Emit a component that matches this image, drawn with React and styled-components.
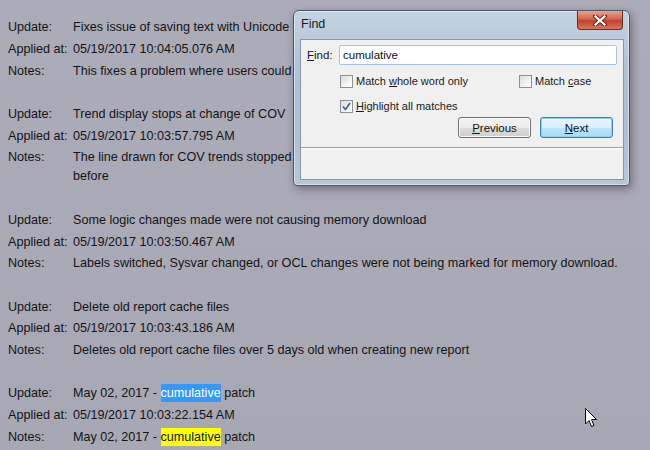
import styled, { createGlobalStyle } from 'styled-components';

const GlobalStyle = createGlobalStyle`
  html, body {
    margin: 0;
    padding: 0;
    background: #a9a9b5;
  }
  body {
    font-family: "Liberation Sans", Arial, sans-serif;
    color: #141414;
  }
`;

const updates = [
  {
    update: 'Fixes issue of saving text with Unicode',
    applied: '05/19/2017 10:04:05.076 AM',
    notes: ['This fixes a problem where users could'],
  },
  {
    update: 'Trend display stops at change of COV',
    applied: '05/19/2017 10:03:57.795 AM',
    notes: ['The line drawn for COV trends stopped', 'before'],
  },
  {
    update: 'Some logic changes made were not causing memory download',
    applied: '05/19/2017 10:03:50.467 AM',
    notes: ['Labels switched, Sysvar changed, or OCL changes were not being marked for memory download.'],
  },
  {
    update: 'Delete old report cache files',
    applied: '05/19/2017 10:03:43.186 AM',
    notes: ['Deletes old report cache files over 5 days old when creating new report'],
  },
];

export default function App() {
  return (
    <>
      <GlobalStyle />
      <Page>
        <Log>
          {updates.map((u) => (
            <Group key={u.applied}>
              <Row>
                <Label>Update:</Label>
                <Value>{u.update}</Value>
              </Row>
              <Row>
                <Label>Applied at:</Label>
                <Value>{u.applied}</Value>
              </Row>
              <Row>
                <Label>Notes:</Label>
                <Value>
                  {u.notes.map((n) => (
                    <NoteLine key={n}>{n}</NoteLine>
                  ))}
                </Value>
              </Row>
            </Group>
          ))}
          <Group>
            <Row>
              <Label>Update:</Label>
              <Value>
                May 02, 2017 - <Mark $current>cumulative</Mark> patch
              </Value>
            </Row>
            <Row>
              <Label>Applied at:</Label>
              <Value>05/19/2017 10:03:22.154 AM</Value>
            </Row>
            <Row>
              <Label>Notes:</Label>
              <Value>
                May 02, 2017 - <Mark>cumulative</Mark> patch
              </Value>
            </Row>
          </Group>
        </Log>

        <FindWindow>
          <TitleBar>
            <Title>Find</Title>
            <CloseButton>
              <svg width="14" height="11" viewBox="0 0 14 11">
                <path d="M2 1 L12 10 M12 1 L2 10" stroke="#5a2a22" strokeWidth="4" strokeLinecap="square" />
                <path d="M2.5 1.5 L11.5 9.5 M11.5 1.5 L2.5 9.5" stroke="#ffffff" strokeWidth="2.2" strokeLinecap="square" />
              </svg>
            </CloseButton>
          </TitleBar>
          <Client>
            <FindRow>
              <FieldLabel><u>F</u>ind:</FieldLabel>
              <Input defaultValue="cumulative" />
            </FindRow>
            <OptionRow>
              <Option>
                <Box />
                <span>Match <u>w</u>hole word only</span>
              </Option>
              <Option>
                <Box />
                <span>Match <u>c</u>ase</span>
              </Option>
            </OptionRow>
            <OptionRow $gap={11}>
              <Option>
                <Box>
                  <svg width="9" height="9" viewBox="0 0 9 9">
                    <path d="M1 4.5 L3.5 7.5 L8 1" fill="none" stroke="#3a5aa0" strokeWidth="1.6" />
                  </svg>
                </Box>
                <span><u>H</u>ighlight all matches</span>
              </Option>
            </OptionRow>
            <ButtonRow>
              <Button><span><u>P</u>revious</span></Button>
              <Button $default><span><u>N</u>ext</span></Button>
            </ButtonRow>
            <StatusArea />
          </Client>
        </FindWindow>

        <Cursor>
          <svg width="13" height="20" viewBox="0 0 13 20">
            <path
              d="M0.5 0.5 L0.5 16 L4 12.5 L6.5 18.5 L9 17.5 L6.5 11.5 L11.5 11.5 Z"
              fill="#ffffff"
              stroke="#000000"
              strokeWidth="1"
            />
          </svg>
        </Cursor>
      </Page>
    </>
  );
}

const Page = styled.div`
  position: relative;
  width: 650px;
  height: 450px;
  overflow: hidden;
  background: linear-gradient(180deg, #acabb8 0%, #a8a8b4 100%);
`;

const Log = styled.div`
  display: flex;
  flex-direction: column;
  gap: 21.7px;
  padding: 17px 0 0 8px;
  font-size: 12.6px;
`;

const Group = styled.div`
  display: flex;
  flex-direction: column;
`;

const Row = styled.div`
  display: grid;
  grid-template-columns: 65px auto;
  line-height: 19px;
  padding: 1.35px 0;
  white-space: nowrap;
`;

const Label = styled.span``;

const Value = styled.span`
  display: block;
`;

const NoteLine = styled.div``;

const Mark = styled.span`
  background: ${(p) => (p.$current ? '#3399ff' : '#ffff00')};
  color: ${(p) => (p.$current ? '#ffffff' : '#141414')};
  padding: 2px 0;
`;

const FindWindow = styled.div`
  position: absolute;
  left: 293px;
  top: 10px;
  width: 337px;
  height: 176px;
  box-sizing: border-box;
  padding: 0 5px 5px 6px;
  border: 1px solid #4d5866;
  border-radius: 6px 6px 4px 4px;
  background: linear-gradient(180deg, #c4d3e2 0%, #b2c3d6 30%, #aebfd1 60%, #b8c6d4 100%);
  box-shadow: 0 0 0 1px rgba(255, 255, 255, 0.45) inset, 2px 3px 8px rgba(0, 0, 0, 0.35);
  display: flex;
  flex-direction: column;
`;

const TitleBar = styled.div`
  height: 28px;
  display: flex;
  align-items: flex-start;
  justify-content: space-between;
`;

const Title = styled.span`
  font-family: "Liberation Sans", Arial, sans-serif;
  font-size: 12.5px;
  color: #1b1b1b;
  padding: 6px 0 0 1px;
`;

const CloseButton = styled.div`
  width: 46px;
  height: 19px;
  margin-right: 1px;
  box-sizing: border-box;
  border: 1px solid #6d2c22;
  border-top: none;
  border-radius: 0 0 4px 4px;
  background: linear-gradient(180deg, #e8a491 0%, #d4644c 45%, #c2412a 55%, #d6775f 100%);
  display: flex;
  align-items: center;
  justify-content: center;
`;

const Client = styled.div`
  flex: 1;
  background: #f0f0f0;
  border: 1px solid #8896a6;
  display: flex;
  flex-direction: column;
  font-size: 11px;
  color: #1a1a1a;
`;

const FindRow = styled.div`
  display: flex;
  align-items: center;
  padding: 5px 6px 0 6px;
  gap: 9px;
`;

const FieldLabel = styled.span`
  width: 23px;
  font-size: 11.5px;
`;

const Input = styled.input`
  flex: 1;
  height: 20px;
  box-sizing: border-box;
  border: 1px solid #a9c3dc;
  border-radius: 2px;
  padding: 0 3px;
  font-family: "Liberation Sans", Arial, sans-serif;
  font-size: 11.5px;
  color: #111;
  background: #fff;
  outline: none;
`;

const OptionRow = styled.div`
  display: grid;
  grid-template-columns: 179px auto;
  padding: ${(p) => p.$gap || 9}px 0 0 39px;
`;

const Option = styled.label`
  display: flex;
  align-items: center;
  gap: 3px;
  height: 14px;
  white-space: nowrap;
`;

const Box = styled.span`
  width: 13px;
  height: 13px;
  box-sizing: border-box;
  border: 1px solid #8e8f8f;
  background: linear-gradient(135deg, #dcdcdc 0%, #f6f6f6 70%, #ffffff 100%);
  display: flex;
  align-items: center;
  justify-content: center;
`;

const ButtonRow = styled.div`
  display: flex;
  justify-content: flex-end;
  gap: 9px;
  padding: 4px 10px 0 0;
`;

const Button = styled.div`
  width: 73px;
  height: 21px;
  box-sizing: border-box;
  border: 1px solid ${(p) => (p.$default ? '#3c7fb1' : '#707070')};
  border-radius: 3px;
  background: ${(p) =>
    p.$default
      ? 'linear-gradient(180deg, #eaf6fd 0%, #d9f0fc 50%, #bee6fd 51%, #a7d9f5 100%)'
      : 'linear-gradient(180deg, #f2f2f2 0%, #ebebeb 50%, #dddddd 51%, #cfcfcf 100%)'};
  box-shadow: ${(p) => (p.$default ? '0 0 0 1px #8fd0f3 inset' : '0 0 0 1px #fbfbfb inset')};
  display: flex;
  align-items: center;
  justify-content: center;
  font-size: 11.5px;
  color: #111;
`;

const StatusArea = styled.div`
  flex: 1;
  margin-top: 9px;
  border-top: 1px solid #a0a0a0;
  box-shadow: 0 1px 0 #ffffff inset;
`;

const Cursor = styled.div`
  position: absolute;
  left: 585px;
  top: 408px;
  line-height: 0;
`;
